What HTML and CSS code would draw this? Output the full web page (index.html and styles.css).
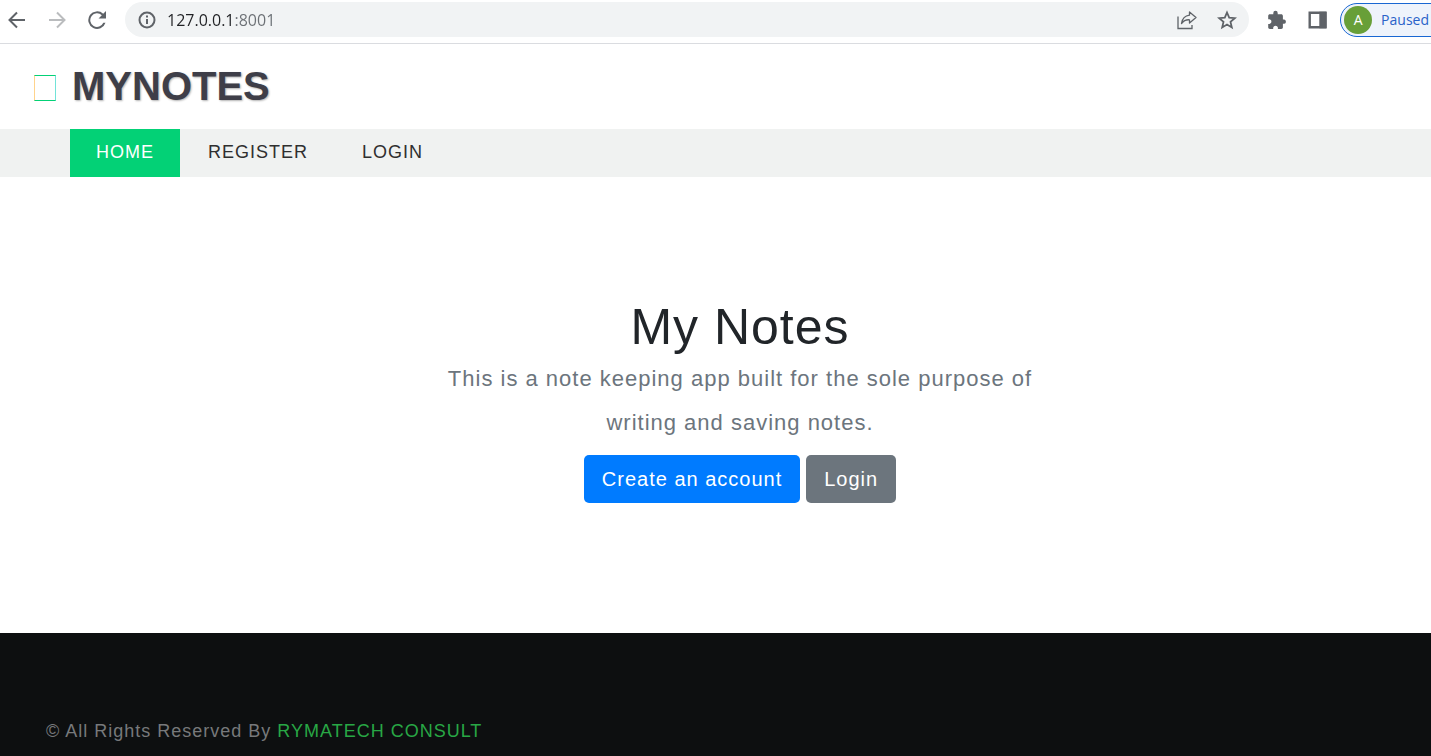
FILE: index.html
```html
<!DOCTYPE html>
<html lang="en">
<head>
<meta charset="utf-8">
<meta name="viewport" content="width=device-width, initial-scale=1">
<title>My Notes</title>
<link rel="stylesheet" href="styles.css">
</head>
<body>
<div class="toolbar">
  <button class="icon-button" type="button" aria-label="Back">
    <svg viewBox="0 0 24 24" fill="none" stroke="#5f6368" stroke-width="2"><path d="M20 12H5M12 4.500 4.500 12l7.500 7.500"/></svg>
  </button>
  <button class="icon-button" type="button" aria-label="Forward">
    <svg viewBox="0 0 24 24" fill="none" stroke="#babcbe" stroke-width="2"><path d="M4 12h15M12 4.500 19.500 12 12 19.500"/></svg>
  </button>
  <button class="icon-button" type="button" aria-label="Reload">
    <svg viewBox="0 0 24 24" fill="#5f6368"><path d="M18.200 5.800A8.800 8.800 0 1 0 20.500 14.800h-2.200A6.800 6.800 0 1 1 16.800 7.200L13.500 10.500h7.500V3z"/></svg>
  </button>
  <div class="omnibox">
    <button class="icon-button" type="button" aria-label="Site information">
      <svg viewBox="0 0 24 24" fill="none" stroke="#5f6368" stroke-width="2"><circle cx="12" cy="12" r="7.500"/><path d="M12 11v5M12 7.500v2"/></svg>
    </button>
    <input class="address" type="text" value="127.0.0.1:8001" aria-label="Address" spellcheck="false">
    <button class="icon-button" type="button" aria-label="Share">
      <svg viewBox="0 0 24 24" fill="none" stroke="#5f6368" stroke-width="1.300"><path d="M3 8.500V20.500h14V17"/><path d="M14.500 4 21 9.500 14.500 15v-3.200C11 11.500 8.500 12.800 6.500 15.500 7.200 11 9.800 7.800 14.500 7.200z" stroke-linejoin="round"/></svg>
    </button>
    <button class="icon-button" type="button" aria-label="Bookmark this page">
      <svg viewBox="0 0 24 24" fill="none" stroke="#5f6368" stroke-width="1.800"><path d="m12 4.500 2.200 5.200 5.600.5-4.300 3.700 1.300 5.500L12 16.500l-4.800 2.900 1.300-5.500-4.300-3.700 5.600-.5z"/></svg>
    </button>
  </div>
  <button class="icon-button" type="button" aria-label="Extensions">
    <svg viewBox="0 0 24 24" fill="#5f6368"><path d="M19.200 11.500h-1.300V7.900c0-1-.8-1.700-1.700-1.700h-3.500V4.900a2.200 2.200 0 0 0-4.400 0v1.300H4.900c-1 0-1.700.7-1.700 1.700v3.300h1.300a2.400 2.400 0 0 1 0 4.700H3.200v3.300c0 1 .7 1.700 1.700 1.700h3.300v-1.300a2.400 2.400 0 0 1 4.700 0v1.300h3.300c1 0 1.700-.8 1.700-1.700v-3.400h1.300a2.200 2.200 0 0 0 0-4.300z"/></svg>
  </button>
  <button class="icon-button" type="button" aria-label="Side panel">
    <svg viewBox="0 0 24 24" fill="none" stroke="#5f6368" stroke-width="2.400"><path d="M4.700 4.700h15.600v14.600H4.700z"/><path fill="#5f6368" d="M15.500 5h5v14h-5z"/></svg>
  </button>
  <button class="profile" type="button"><span class="avatar">A</span>Paused</button>
</div>
<header class="site-header">
  <a class="brand" href="#"><span class="brand-mark"></span>MYNOTES</a>
</header>
<nav class="site-nav">
  <a class="nav-link nav-link-active" href="#">HOME</a>
  <a class="nav-link" href="#">REGISTER</a>
  <a class="nav-link" href="#">LOGIN</a>
</nav>
<main class="hero">
  <h1 class="hero-title">My Notes</h1>
  <p class="hero-text">This is a note keeping app built for the sole purpose of writing and saving notes.</p>
  <div class="actions">
    <a class="button button-primary" href="#">Create an account</a>
    <a class="button button-secondary" href="#">Login</a>
  </div>
</main>
<footer class="site-footer">
  <p class="copyright">© All Rights Reserved By <a class="footer-link" href="#">RYMATECH CONSULT</a></p>
</footer>
</body>
</html>
```
FILE: styles.css
```css
* {
  box-sizing: border-box;
}

body {
  display: flex;
  flex-direction: column;
  min-height: 100vh;
  margin: 0;
  background: #fff;
  color: #212529;
  font-family: "Liberation Sans", Arial, sans-serif;
  letter-spacing: 1px;
}

a {
  text-decoration: none;
}

.toolbar {
  display: flex;
  align-items: center;
  gap: 16px;
  padding: 2px 0 6px 5px;
  border-bottom: 1px solid #dadce0;
  overflow: hidden;
  font-family: "Open Sans", sans-serif;
  letter-spacing: normal;
}

.icon-button {
  display: flex;
  flex: none;
  width: 24px;
  height: 24px;
  padding: 0;
  border: 0;
  background: none;
}

.icon-button svg {
  width: 24px;
  height: 24px;
}

.omnibox {
  display: flex;
  flex: 1;
  align-items: center;
  min-width: 0;
  height: 35px;
  padding: 0 10px;
  border-radius: 18px;
  background: #f1f3f4;
}

.omnibox .icon-button + .icon-button {
  margin-left: 16px;
}

.address {
  flex: 1;
  min-width: 0;
  margin-left: 8px;
  padding: 0;
  border: 0;
  outline: 0;
  background: linear-gradient(90deg, #202124 67px, #6b6f74 67px);
  background-clip: text;
  -webkit-background-clip: text;
  color: transparent;
  font: 16px "Open Sans", sans-serif;
}

.profile {
  display: flex;
  flex: none;
  align-items: center;
  gap: 9px;
  height: 34px;
  margin: 0 -20px 0 -5px;
  padding: 0 21px 0 3px;
  border: 1px solid #1967d2;
  border-radius: 17px;
  background: #eef3fb;
  color: #2a62c9;
  font: 14px "Open Sans", sans-serif;
}

.avatar {
  width: 28px;
  border-radius: 50%;
  background: #689f38;
  color: #fff;
  line-height: 28px;
  text-align: center;
}

.site-header {
  padding: 18px 34px 19px;
}

.brand {
  display: inline-flex;
  align-items: center;
  gap: 16px;
  color: #3e3e48;
  font-size: 40px;
  font-weight: 700;
  line-height: 48px;
  letter-spacing: normal;
  text-shadow: 1px 1px 2px rgba(0, 0, 0, 0.3);
}

.brand-mark {
  width: 22px;
  height: 26px;
  margin-top: 3px;
  border: 1px solid #03d176;
  border-left-color: #ffd38c;
  border-right-color: #72e3d8;
}

.site-nav {
  display: flex;
  gap: 2px;
  padding: 0 70px;
  background: #f0f2f1;
}

.nav-link {
  padding: 0 26px 2px;
  color: #2f2f2f;
  font-size: 18px;
  line-height: 46px;
}

.nav-link-active {
  background: #03d176;
  color: #fff;
}

.hero {
  display: flex;
  flex-direction: column;
  align-items: center;
  padding: 120px 0 130px 49px;
  text-align: center;
}

.hero-title {
  margin: 0;
  font-size: 50px;
  font-weight: 400;
  line-height: 60px;
}

.hero-text {
  max-width: 640px;
  margin: 0 0 10px;
  color: #6c757d;
  font-size: 22px;
  line-height: 44px;
}

.actions {
  display: flex;
  gap: 6px;
}

.button {
  padding: 8px 18px;
  border-radius: 5px;
  color: #fff;
  font-size: 20px;
  line-height: 32px;
}

.button-primary {
  background: #007bff;
}

.button-secondary {
  background: #6c757d;
}

.site-footer {
  flex: 1;
  padding: 84px 46px 11px;
  background: #0d0f10;
}

.copyright {
  margin: 0;
  color: #77797b;
  font-size: 18px;
  line-height: 28px;
}

.footer-link {
  color: #28a745;
}
```
